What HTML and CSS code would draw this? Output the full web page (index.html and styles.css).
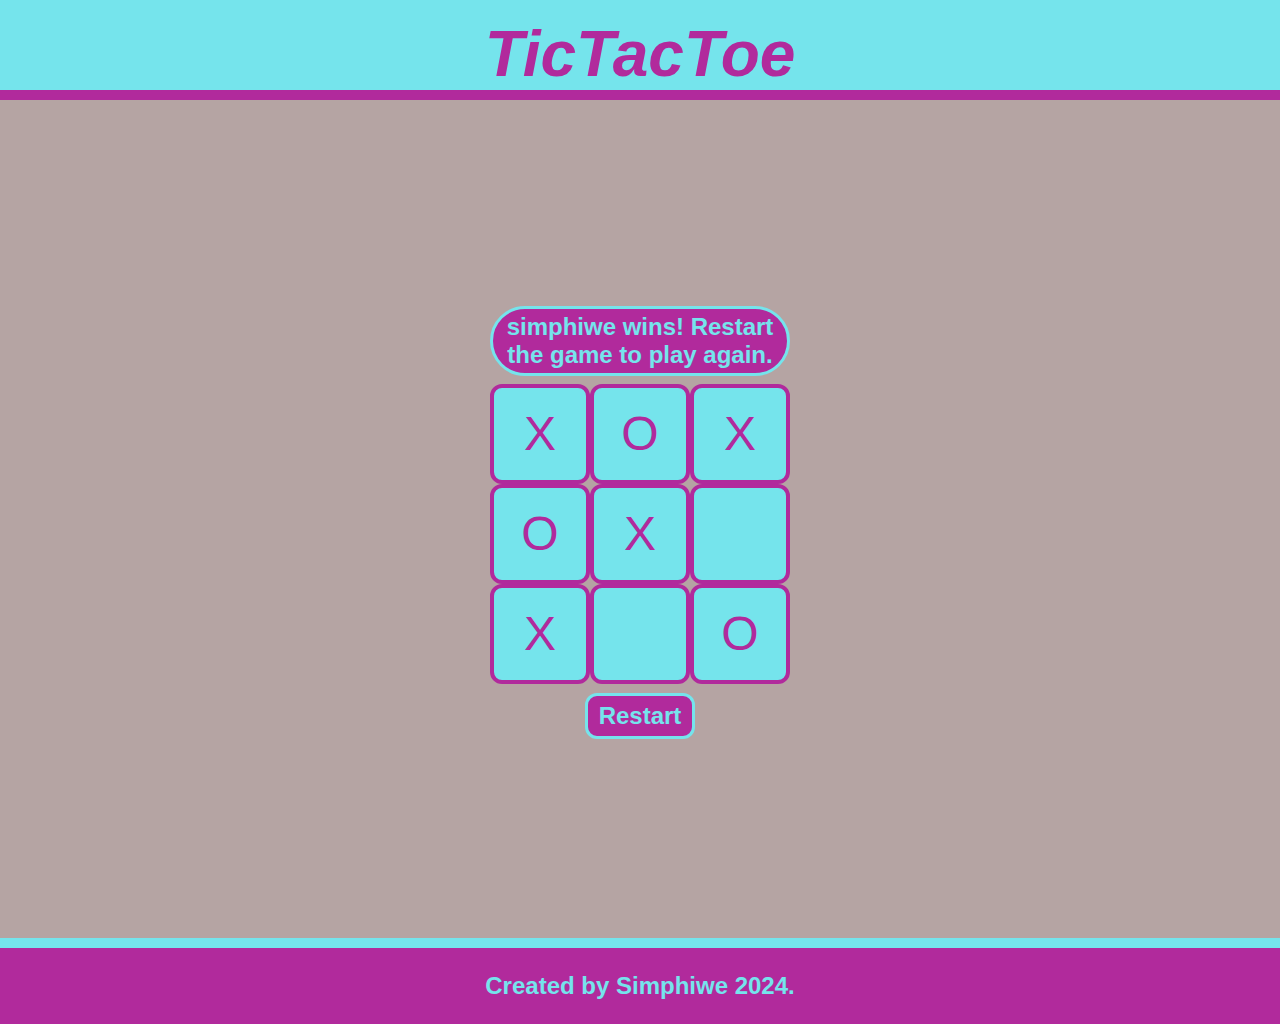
FILE: index.html
```html
<!DOCTYPE html>
<html lang="en">
<head>
<meta charset="utf-8">
<title>TicTacToe</title>
<link rel="stylesheet" href="styles.css">
</head>
<body>
<header class="site-header">
  <h1 class="title">TicTacToe</h1>
</header>
<main class="main">
  <div class="game">
    <div class="status">simphiwe wins! Restart the game to play again.</div>
    <div class="board">
      <div class="cell">X</div>
      <div class="cell">O</div>
      <div class="cell">X</div>
      <div class="cell">O</div>
      <div class="cell">X</div>
      <div class="cell"></div>
      <div class="cell">X</div>
      <div class="cell"></div>
      <div class="cell">O</div>
    </div>
    <button class="restart">Restart</button>
  </div>
</main>
<footer class="site-footer">
  <p class="credit">Created by Simphiwe 2024.</p>
</footer>
</body>
</html>
```

FILE: styles.css
```css
* { box-sizing: border-box; }

html, body {
  margin: 0;
  padding: 0;
}

body {
  font-family: "Liberation Sans", Arial, sans-serif;
  background: #b5a4a3;
  color: #b12a9c;
}

.site-header {
  height: 100px;
  background: #75e4ec;
  border-bottom: 10px solid #b12a9c;
  padding-top: 18px;
}

.title {
  margin: 0;
  text-align: center;
  font-size: 64px;
  font-weight: bold;
  font-style: italic;
  color: #b12a9c;
  line-height: 72px;
}

.main {
  height: 838px;
  display: flex;
  align-items: center;
  justify-content: center;
  padding-top: 6px;
}

.game {
  width: 300px;
  display: flex;
  flex-direction: column;
  align-items: center;
}

.status {
  width: 300px;
  background: #b12a9c;
  color: #75e4ec;
  border: 3px solid #75e4ec;
  border-radius: 36px;
  padding: 4px 10px;
  text-align: center;
  font-size: 24px;
  font-weight: bold;
  line-height: 28px;
}

.board {
  margin-top: 8px;
  display: grid;
  grid-template-columns: repeat(3, 100px);
  grid-template-rows: repeat(3, 100px);
}

.cell {
  background: #75e4ec;
  border: 4px solid #b12a9c;
  border-radius: 12px;
  display: flex;
  align-items: center;
  justify-content: center;
  font-size: 48px;
  color: #b12a9c;
}

.restart {
  margin-top: 9px;
  font-family: "Liberation Sans", Arial, sans-serif;
  font-size: 24px;
  font-weight: bold;
  color: #75e4ec;
  background: #b12a9c;
  border: 3px solid #75e4ec;
  border-radius: 12px;
  padding: 6px 11px;
  line-height: 28px;
  cursor: pointer;
}

.site-footer {
  height: 86px;
  background: #b12a9c;
  border-top: 10px solid #75e4ec;
  display: flex;
  align-items: center;
  justify-content: center;
}

.credit {
  margin: 0;
  font-size: 24px;
  font-weight: bold;
  color: #75e4ec;
}
```
